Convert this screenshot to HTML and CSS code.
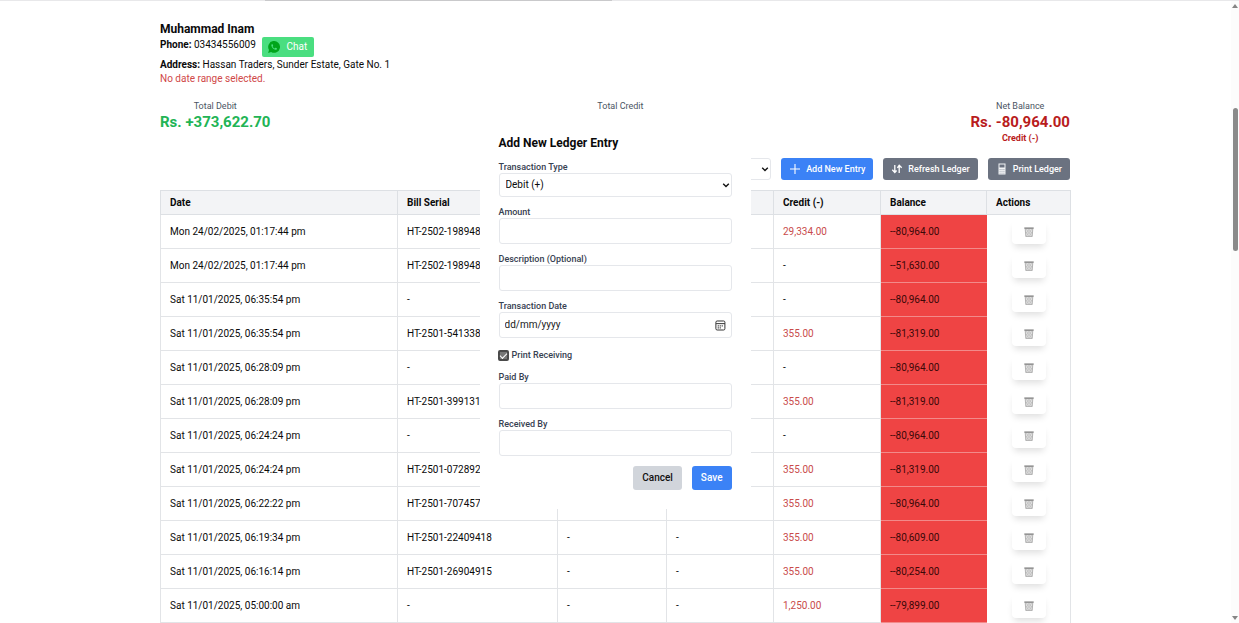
FILE: index.html
```html
<!DOCTYPE html>
<html lang="en">
<head>
<meta charset="utf-8">
<meta name="viewport" content="width=device-width, initial-scale=1">
<title>Customer Ledger</title>
<link rel="stylesheet" href="styles.css">
</head>
<body>
<svg class="sprite" aria-hidden="true">
  <symbol id="trash" viewBox="0 0 10 10">
    <path d="M1.2 1.5 1.800 9.600h6.400l.6-8.100z" fill="#dedede" stroke="#999" stroke-width=".7"/>
    <path d="M2.2 2 7.6 9M4.6 2l3.4 4.5M2 5l3 4.4M7.8 2 2.4 9M5.4 2 2 6.5M8 5 5 9.4" stroke="#b4b4b4" stroke-width=".5"/>
    <path d="M.3.4h9.4v1.4H.3z" fill="#8c8c8c"/>
  </symbol>
</svg>
<div class="topline"><div class="topline-mark"></div></div>
<main class="page">
  <header class="customer">
    <h1 class="name">Muhammad Inam</h1>
    <div class="phone-row">
      <p class="line"><b>Phone:</b> 03434556009</p>
      <button class="chat" type="button">
        <svg class="chat-icon" viewBox="0 0 24 24" aria-hidden="true"><path d="M.3 24 2 17.8A11.8 11.8 0 1 1 6.2 22z" fill="#00a51b"/><path d="M8.3 6.2c-.7.2-1.8 1.200-1.600 2.900.5 3.800 4.300 7.900 8.300 8.600 1.600.2 2.900-.9 3-2.200.1-.6-2.500-2.100-3-1.900-.5.1-.9 1.300-1.500 1.200-1.800-.6-3.500-2.200-4.200-4 0-.5 1-1 1-1.500-.1-.5-1-2.900-2-3.100z" fill="#4ade80"/></svg>
        Chat
      </button>
    </div>
    <p class="line"><b>Address:</b> Hassan Traders, Sunder Estate, Gate No. 1</p>
    <p class="line warn">No date range selected.</p>
  </header>

  <section class="totals">
    <div class="total"><span class="total-label">Total Debit</span><strong class="total-value green">Rs. +373,622.70</strong></div>
    <div class="total"><span class="total-label">Total Credit</span></div>
    <div class="total"><span class="total-label">Net Balance</span><strong class="total-value red">Rs. -80,964.00</strong><span class="total-note">Credit (-)</span></div>
  </section>

  <div class="toolbar">
    <select class="filter" aria-label="Filter entries"><option></option></select>
    <button class="btn primary" type="button"><svg class="icon" viewBox="0 0 12 12" aria-hidden="true"><path d="M6 1v10M1 6h10" stroke="currentColor" stroke-width="1.100"/></svg>Add New Entry</button>
    <button class="btn gray" type="button"><svg class="icon" viewBox="0 0 12 12" aria-hidden="true"><path d="M3.800 2v7M1.300 6.800 3.800 9.500l1.800-2M8.200 10V3M6.400 4.800l1.800-2.600 2.500 2.600" fill="none" stroke="currentColor" stroke-width="1.300"/></svg>Refresh Ledger</button>
    <button class="btn gray" type="button"><svg class="icon" viewBox="0 0 12 12" aria-hidden="true"><path d="M2.500.5h7v11h-7z" fill="#f3f4f6"/><path d="M3.500 1.500h5v3h-5z" fill="#6b7280"/><path d="M3.500 6.500h5M3.500 8.300h5M3.500 10.200h5" stroke="#9ca3af" stroke-width=".8" stroke-dasharray="1.200 .7"/></svg>Print Ledger</button>
  </div>

  <table class="ledger">
    <colgroup><col class="c-date"><col class="c-serial"><col class="c-desc"><col class="c-amt"><col class="c-amt"><col class="c-bal"><col class="c-act"></colgroup>
    <thead><tr><th>Date</th><th>Bill Serial</th><th></th><th></th><th>Credit (-)</th><th>Balance</th><th>Actions</th></tr></thead>
    <tbody id="rows"></tbody>
  </table>
</main>

<form class="modal" role="dialog" aria-labelledby="modal-title">
  <h2 class="modal-title" id="modal-title">Add New Ledger Entry</h2>
  <div class="field"><label for="type">Transaction Type</label><select class="control" id="type"><option>Debit (+)</option><option>Credit (-)</option></select></div>
  <div class="field"><label for="amount">Amount</label><input class="control" id="amount" type="text" inputmode="decimal"></div>
  <div class="field"><label for="desc">Description (Optional)</label><input class="control" id="desc" type="text"></div>
  <div class="field"><label for="date">Transaction Date</label>
    <div class="control date"><input class="date-input" id="date" type="text" placeholder="dd/mm/yyyy"><button class="date-btn" type="button" aria-label="Open calendar"><svg class="cal" viewBox="0 0 10 10" aria-hidden="true"><rect x=".8" y=".9" width="8.200" height="8.200" rx="1.200" fill="none" stroke="#333" stroke-width=".9"/><path d="M1 3.300h8" stroke="#333" stroke-width=".9"/><path d="M2.400 5.300h5.200M2.400 7.200h3" stroke="#555" stroke-width="1" stroke-dasharray="1.200 .6"/></svg></button></div>
  </div>
  <div class="check-row"><input class="check" id="print" type="checkbox" checked><label for="print">Print Receiving</label></div>
  <div class="field"><label for="paid">Paid By</label><input class="control" id="paid" type="text"></div>
  <div class="field"><label for="received">Received By</label><input class="control" id="received" type="text"></div>
  <div class="actions"><button class="action cancel" type="button">Cancel</button><button class="action save" type="button">Save</button></div>
</form>

<div class="scrollbar" aria-hidden="true"><i class="arrow up"></i><i class="thumb"></i><i class="arrow down"></i></div>
<script src="ledger.js"></script>
</body>
</html>
```
FILE: styles.css
```css
* { box-sizing: border-box; }
body { margin: 0; padding-right: 9px; background: #fff; color: #0a0a0a; font: 10px/14px Roboto, "Liberation Sans", sans-serif; }
h1, h2, p { margin: 0; }
button, input, select { font: inherit; color: inherit; }
button { border: 0; padding: 0; cursor: pointer; }
select { appearance: none; background: #fff url("data:image/svg+xml,%3Csvg xmlns='http://www.w3.org/2000/svg' viewBox='0 0 8 8'%3E%3Cpath d='M1.200 2.800 4 5.500l2.800-2.700' fill='none' stroke='%23111' stroke-width='1.400'/%3E%3C/svg%3E") no-repeat right 1px center / 8px 8px; }
.sprite { position: absolute; width: 0; height: 0; }
.topline { height: 1px; margin-right: -9px; background: #e8e8ea; }
.topline-mark { width: 28%; height: 1px; margin-left: 265px; background: #c9c9cb; }
.page { max-width: 910px; margin: 0 auto; padding-top: 20px; }

.name { font-size: 12px; line-height: 16px; font-weight: 700; }
.phone-row { display: flex; align-items: flex-start; gap: 6px; height: 21px; }
.line { line-height: 14px; }
.line b { font-weight: 700; }
.phone-row .line { line-height: 16px; }
.warn { color: #d04848; }
.chat { display: flex; align-items: center; justify-content: center; gap: 6px; width: 52px; height: 20px; border-radius: 2px; background: #4ade80; color: #fff; }
.chat-icon { width: 12px; height: 12px; }

.totals { display: flex; justify-content: space-between; height: 48px; margin-top: 14px; }
.total { display: flex; flex-direction: column; align-items: center; }
.total-label { font-size: 9px; line-height: 13px; color: #4b5563; }
.total-value { font-size: 15px; line-height: 18px; font-weight: 700; }
.total-note { font-size: 9px; line-height: 14px; font-weight: 700; color: #b91c1c; }
.green { color: #22b455; }
.red { color: #b91c1c; }

.toolbar { display: flex; justify-content: flex-end; gap: 10px; margin: 10px 0; }
.filter { width: 120px; height: 22px; border: 1px solid #e5e7eb; border-radius: 3px; }
.btn { display: flex; align-items: center; justify-content: center; gap: 5px; height: 22px; padding: 0 8px; border-radius: 3px; color: #fff; font-size: 9px; font-weight: 500; white-space: nowrap; }
.icon { width: 12px; height: 12px; }
.primary { background: #3b82f6; }
.gray { background: #6b7280; }

.ledger { width: 100%; table-layout: fixed; border-collapse: collapse; }
.c-date { width: 237px; }
.c-serial { width: 160px; }
.c-desc { width: 109px; }
.c-amt { width: 107px; }
.c-bal { width: 106px; }
.c-act { width: 84px; }
.ledger th { height: 24px; padding: 0 9px; text-align: left; font-weight: 700; background: #f3f4f6; border: 1px solid #dde0e4; }
.ledger td { height: 34px; padding: 0 9px; border: 1px solid #e2e4e7; white-space: nowrap; }
.ledger .credit { color: #c94b4b; }
.ledger .balance { background: #ef4444; color: #3a0808; border-color: #f28a8a; border-right-color: #ef4444; }
.ledger .act { border-top-color: transparent; border-bottom-color: transparent; }
.delete { display: grid; place-items: center; width: 34px; height: 24px; margin: 0 auto; border-radius: 4px; background: #fff; box-shadow: 0 5px 7px -2px rgba(0, 0, 0, .13); }
.trash { width: 10px; height: 10px; }

.modal { position: absolute; top: 113px; left: calc(50% - 140px); width: 271px; padding: 19px; display: flex; flex-direction: column; gap: 10px; background: #fff; font-size: 9px; }
.modal-title { margin-bottom: -2px; font-size: 12px; line-height: 22px; font-weight: 700; }
.field { display: flex; flex-direction: column; }
.modal label { line-height: 11px; font-weight: 500; color: #374151; }
.control { width: 100%; height: 26px; border: 1px solid #e5e7eb; border-radius: 3px; padding: 0 5px; font-size: 10px; }
select.control { height: 24px; padding: 0 6px; }
.date { display: flex; align-items: center; }
.date-input { flex: 1; min-width: 0; border: 0; padding: 0; outline: 0; background: none; }
.date-input::placeholder { color: #1a1a1a; }
.date-btn { display: grid; background: none; }
.cal { width: 11px; height: 11px; }
.check-row { display: flex; align-items: center; gap: 3px; height: 14px; margin-left: -1px; }
.check { appearance: none; width: 11px; height: 11px; margin: 0; border: 2px solid #4a4a4a; border-radius: 2px; background: #777; display: grid; place-items: center; }
.check::after { content: ""; width: 6px; height: 3px; border: solid #fff; border-width: 0 0 1px 1px; rotate: -45deg; }
.actions { display: flex; justify-content: flex-end; gap: 10px; }
.action { height: 24px; padding: 0 9px; border-radius: 3px; font-size: 10px; font-weight: 500; }
.cancel { background: #d1d5db; color: #111; }
.save { background: #3b82f6; color: #fff; }

.scrollbar { position: fixed; top: 1px; right: 0; bottom: 0; width: 8px; display: flex; flex-direction: column; align-items: center; background: #fcfcfc; }
.arrow { width: 0; height: 0; border: 3px solid transparent; }
.up { border-bottom: 4px solid #858585; border-top: 0; margin-top: 3px; }
.down { border-top: 4px solid #858585; border-bottom: 0; margin: auto 0 3px; }
.thumb { width: 5px; height: 23%; margin-top: 100px; border-radius: 3px; background: #8a8a8a; }
```
FILE: ledger.js
```js
const entries = [
  ["Mon 24/02/2025, 01:17:44 pm", "HT-2502-19894882", "", "29,334.00", "80,964.00"],
  ["Mon 24/02/2025, 01:17:44 pm", "HT-2502-19894882", "", "-", "51,630.00"],
  ["Sat 11/01/2025, 06:35:54 pm", "-", "", "-", "80,964.00"],
  ["Sat 11/01/2025, 06:35:54 pm", "HT-2501-54133838", "", "355.00", "81,319.00"],
  ["Sat 11/01/2025, 06:28:09 pm", "-", "", "-", "80,964.00"],
  ["Sat 11/01/2025, 06:28:09 pm", "HT-2501-39913171", "", "355.00", "81,319.00"],
  ["Sat 11/01/2025, 06:24:24 pm", "-", "", "-", "80,964.00"],
  ["Sat 11/01/2025, 06:24:24 pm", "HT-2501-07289238", "", "355.00", "81,319.00"],
  ["Sat 11/01/2025, 06:22:22 pm", "HT-2501-70745788", "", "355.00", "80,964.00"],
  ["Sat 11/01/2025, 06:19:34 pm", "HT-2501-22409418", "-", "355.00", "80,609.00"],
  ["Sat 11/01/2025, 06:16:14 pm", "HT-2501-26904915", "-", "355.00", "80,254.00"],
  ["Sat 11/01/2025, 05:00:00 am", "-", "-", "1,250.00", "79,899.00"]
];
document.getElementById("rows").innerHTML = entries.map(([date, serial, detail, credit, balance]) => `
  <tr><td>${date}</td><td>${serial}</td><td>${detail}</td><td>${detail}</td>
  <td class="${credit === "-" ? "" : "credit"}">${credit}</td><td class="balance">--${balance}</td>
  <td class="act"><button class="delete" type="button" aria-label="Delete entry"><svg class="trash"><use href="#trash"/></svg></button></td></tr>`).join("");
```
